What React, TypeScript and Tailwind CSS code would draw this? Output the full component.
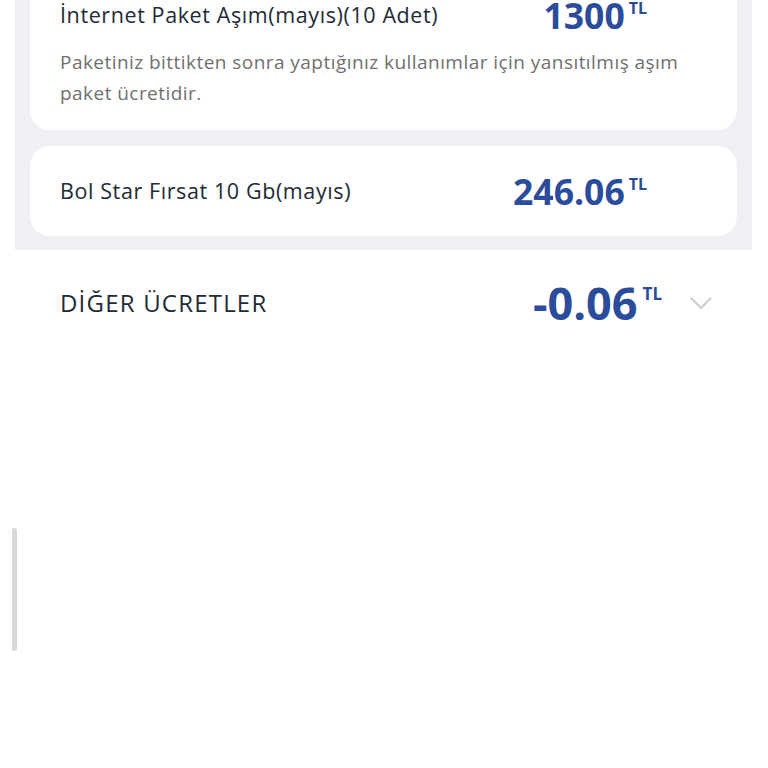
const font = { fontFamily: '"Open Sans", "Noto Sans", sans-serif' };

function Price({ value, big }: { value: string; big?: boolean }) {
  return (
    <div className="flex items-start text-[#2b4c9b]">
      <span className={big ? "text-[45px] leading-[48px] font-bold" : "text-[35.5px] leading-[40px] font-bold"}>
        {value}
      </span>
      <span className={big ? "ml-[5px] mt-[6px] text-[17px] leading-none font-bold" : "ml-[4px] mt-[5px] text-[16px] leading-none font-bold"}>
        TL
      </span>
    </div>
  );
}

function Chevron() {
  return (
    <svg width="22" height="13" viewBox="0 0 22 13" fill="none">
      <polyline points="1.5,1.5 11,11 20.5,1.5" stroke="#cfcfcf" strokeWidth="2.4" strokeLinecap="round" strokeLinejoin="round" />
    </svg>
  );
}

export default function App() {
  return (
    <div className="relative h-[768px] w-[768px] overflow-hidden bg-white" style={font}>
      <div className="ml-[15px] w-[737px] bg-[#eef0f3] px-[15px] pb-[14px]">
        <div className="rounded-b-[20px] bg-white pl-[30px] pr-[50px] pb-[21px]">
          <div className="-mt-[5px] flex h-[40px] items-center justify-between pr-[40px]">
            <span className="text-[21.5px] leading-[28px] tracking-[0.6px] text-[#222a35]">İnternet Paket Aşım(mayıs)(10 Adet)</span>
            <Price value="1300" />
          </div>
          <p className="mt-[12px] text-[19px] leading-[31px] tracking-[0.45px] text-[#6f6f6f]">
            Paketiniz bittikten sonra yaptığınız kullanımlar için yansıtılmış aşım paket ücretidir.
          </p>
        </div>
        <div className="mt-[16px] flex h-[90px] items-center justify-between rounded-[20px] bg-white pl-[30px] pr-[90px]">
          <span className="text-[21.5px] leading-[28px] tracking-[0.6px] text-[#222a35]">Bol Star Fırsat 10 Gb(mayıs)</span>
          <Price value="246.06" />
        </div>
      </div>
      <div className="flex h-[106px] items-center justify-between pl-[60px] pr-[56px]">
        <span className="text-[24px] font-medium tracking-[1.2px] text-[#222a35]">DİĞER ÜCRETLER</span>
        <div className="flex items-center gap-[28px]">
          <Price value="-0.06" big />
          <Chevron />
        </div>
      </div>
      <div className="absolute left-[12px] top-[528px] h-[123px] w-[5px] rounded-full bg-[#d8d8d8]" />
    </div>
  );
}
